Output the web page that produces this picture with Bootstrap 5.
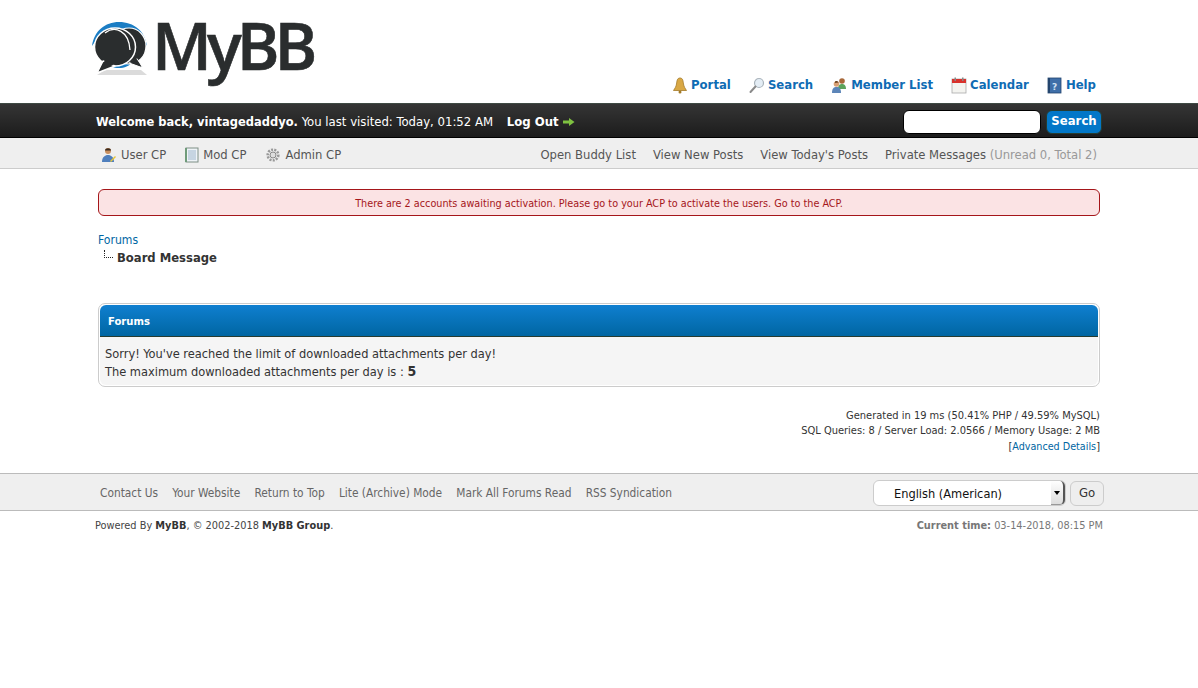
<!DOCTYPE html>
<html lang="en"><head><meta charset="utf-8"><title>Board Message</title>
<link rel="stylesheet" href="https://cdn.jsdelivr.net/npm/bootstrap@5.3.0/dist/css/bootstrap.min.css">
<style>
body{font-family:"DejaVu Sans Condensed","DejaVu Sans",sans-serif;font-size:12.7px;line-height:1.4;color:#333;background:#fff}
a{text-decoration:none;color:#0066a3}
.wrapx{width:1008px;margin-left:95px}
.top-head{height:103px;position:relative}
.logo-box{padding:0 0 0 91px;height:103px}
.logo-mark{margin-top:16px}
.logo-word{font-family:"Open Sans",sans-serif;font-weight:600;font-size:65px;line-height:66px;margin-top:12px;margin-left:-1px;letter-spacing:-5px;color:#2a2d2e;-webkit-text-stroke:.6px #2a2d2e}
.top-menu{position:absolute;right:102px;top:75px;gap:18px;font-size:13px;font-weight:700;line-height:20px}
.top-menu a{color:#0f6cb4;display:flex;align-items:center;gap:3px}
.dark-bar{height:35px;padding-top:3px;background:linear-gradient(#353535,#1c1c1c);border-top:1px solid #3f4a44;border-bottom:1px solid #000;color:#fff;font-size:13px}
.dark-bar .inner{width:1006px;margin-left:96px}
.dark-bar b{font-size:12.75px}
.dark-bar a{color:#fff;font-weight:700;font-size:13px;margin-left:10px}
.srch-form{margin:-1px 0 0}
.srch-in{width:138px;height:24px;border:1px solid #000;border-radius:6px;background:#fff;padding:0}
.srch-btn{width:56px;height:24px;margin-left:5px;border:1px solid #263c30;border-radius:6px;background:#0277c8;color:#fff;font-size:13px;font-weight:600;padding:0}
.sub-bar{height:31px;padding-top:4px;background:#efefef;border-bottom:1px solid #ccc;font-size:12.9px}
.sub-bar .inner{width:996px;margin-left:101px}
.sub-bar a{color:#555}
.sub-bar .greyed{color:#999}
.left-cp{gap:19px}
.right-cp{gap:17px}
.msg-red{margin:20px 0 0 98px;width:1002px;height:27px;background:#fbe3e4;border:1px solid #a5161a;border-radius:6px;color:#a5161a;font-size:10.75px;line-height:27px;text-align:center}
.crumbs{margin:15px 0 0 98px;height:72px;line-height:18px;font-size:12.1px}
.crumbs .here{font-size:12.9px;font-weight:700;color:#333;padding-left:19px;position:relative;display:block}
.tree-mark{position:absolute;left:6px;top:1px;width:9px;height:8px;border-left:1px dotted #222;border-bottom:1px dotted #222}
.box-shell{margin-left:98px;width:1002px;height:84px;border:1px solid #ccc;border-radius:7px;padding:1px;background:#fff}
.box-head{height:32px;background:linear-gradient(#0f7fd0,#0066a2);border-bottom:1px solid #263c30;border-radius:6px 6px 0 0;color:#fff;font-weight:700;font-size:11.2px;line-height:33px;padding-left:8px}
.box-body{height:48px;background:#f5f5f5;border-radius:0 0 6px 6px;padding:8px 5px;line-height:18px}
.box-body b{font-size:14px;line-height:1}
.debug-info{margin:21px 98px 0 0;font-size:11px;line-height:15.4px;text-align:right}
.debug-info a{font-size:10.7px}
.foot-bar{margin-top:19px;height:38px;padding-top:2px;background:#efefef;border-top:1px solid #bbb;border-bottom:1px solid #bbb}
.foot-bar .inner{width:1004px;margin-left:100px}
.foot-bar a{color:#666;font-size:11.8px;margin-right:14.2px}
.lang-sel{width:193px;height:26px;border:1px solid #ccc;border-radius:6px;background:#fff;padding-left:20px;font-size:12.7px;color:#111;line-height:25px;position:relative}
.sel-arrow{position:absolute;right:0;top:0;width:14px;height:24px;border-radius:0 5px 5px 0;background:linear-gradient(#fff,#ddd);border-right:2px solid #555;border-bottom:1px solid #999}
.sel-arrow:after{content:"";position:absolute;left:3px;top:10px;border:3px solid transparent;border-top:4px solid #000}
.go-btn{width:34px;height:25px;margin-left:4px;border:1px solid #ccc;border-radius:6px;background:#eee;color:#333;font-size:13px;padding:0}
.bottom-line{font-size:10.9px;margin-top:7px;color:#444;line-height:16px}
.bottom-line b{color:#333}
.bottom-line .clock{color:#777}
</style></head><body>

<header class="top-head">
<div class="logo-box d-flex align-items-start">
<svg width="62" height="62" viewBox="0 0 62 62" class="flex-shrink-0 logo-mark">
<path d="M1 30C3 15 14 6 28 6C43 6 54 15 56 30C50 20 40 14 28 14C16 14 7 20 1 30Z" fill="#1b7dc4"/>
<path d="M15 46C20 54 36 54 41 46Z" fill="#1b7dc4"/>
<path d="M6 59L14 54L50 54L56 59Z" fill="#ccc" opacity=".7"/>
<ellipse cx="38" cy="30" rx="17" ry="18" fill="#2a2d2e" stroke="#fff" stroke-width="1.200"/>
<path d="M46 43L52 52L38 47Z" fill="#2a2d2e" stroke="#fff" stroke-width="1.200" stroke-linejoin="round"/>
<path d="M45 42L50 50L38 46Z" fill="#2a2d2e"/>
<ellipse cx="24" cy="31" rx="20.500" ry="19" fill="#2a2d2e" stroke="#fff" stroke-width="1.500"/>
<path d="M12 45L6 57L24 50Z" fill="#2a2d2e" stroke="#fff" stroke-width="1.500" stroke-linejoin="round"/>
<path d="M14 44L9 54L24 48Z" fill="#2a2d2e"/>
<path d="M14 17C24 9 38 15 39 34" fill="none" stroke="#fff" stroke-width="1.300"/>
</svg>
<span class="logo-word">MyBB</span>
</div>
<nav class="top-menu d-flex">
<a href="#"><svg width="16" height="17" viewBox="0 0 16 17"><path d="M8 1C5 1 5 4 4.500 7C4 10 3 11 1.500 13.500H14.500C13 11 12 10 11.500 7C11 4 11 1 8 1Z" fill="#d9a845" stroke="#a37a28" stroke-width=".8"/><circle cx="8" cy="15" r="1.500" fill="#a37a28"/></svg>Portal</a>
<a href="#"><svg width="16" height="17" viewBox="0 0 16 17"><circle cx="10" cy="6" r="4.500" fill="#e4edf5" stroke="#aab4bc" stroke-width="1.200"/><path d="M6.500 9.500L1.500 15" stroke="#8a8a8a" stroke-width="2" stroke-linecap="round"/></svg>Search</a>
<a href="#"><svg width="17" height="17" viewBox="0 0 17 17"><circle cx="11" cy="4" r="2.800" fill="#a8683a"/><path d="M7 12C7 8 9 7 11 7C13 7 15 8 15 12Z" fill="#5ca35c"/><circle cx="5.500" cy="7" r="2.800" fill="#d9a074"/><path d="M4 5C4 3.500 7 3.500 7.500 5.500L4 6Z" fill="#6b4423"/><path d="M1 16C1 11 3 10 5.500 10C8 10 10 11 10 16Z" fill="#5c85b8"/></svg>Member List</a>
<a href="#"><svg width="16" height="17" viewBox="0 0 16 17"><rect x="1" y="2" width="14" height="14" fill="#f4f4f0" stroke="#aaa" stroke-width=".8"/><rect x="1" y="2" width="14" height="4" fill="#d8322c"/><rect x="3.500" y="0.500" width="1.500" height="3.500" fill="#8a8a8a"/><rect x="11" y="0.500" width="1.500" height="3.500" fill="#8a8a8a"/></svg>Calendar</a>
<a href="#"><svg width="16" height="17" viewBox="0 0 16 17"><rect x="1" y="1" width="13" height="15" fill="#3f6fa8" stroke="#24456e" stroke-width=".8"/><rect x="1" y="1" width="2" height="15" fill="#24456e"/><text x="5" y="12.500" font-size="9" fill="#cfe0f2" font-family="DejaVu Sans">?</text></svg>Help</a>
</nav>
</header>

<div class="dark-bar"><div class="inner d-flex align-items-center justify-content-between h-100">
<div><b>Welcome back, vintagedaddyo.</b> You last visited: Today, 01:52 AM <a href="#">Log Out <svg width="12" height="10" viewBox="0 0 12 10"><path d="M0 3.500H6V1L11.500 5L6 9V6.500H0Z" fill="#7fc241"/></svg></a></div>
<form class="d-flex srch-form"><input class="srch-in" type="text" aria-label="Search"><button class="srch-btn" type="button">Search</button></form>
</div></div>

<div class="sub-bar"><div class="inner d-flex align-items-center justify-content-between h-100">
<div class="d-flex left-cp">
<a href="#" class="d-flex align-items-center gap-1"><svg width="16" height="16" viewBox="0 0 16 16"><circle cx="7" cy="4" r="3" fill="#c98f5f"/><path d="M4 3.500C4 0.500 10 0.500 10 3.500Z" fill="#3d2c1e"/><path d="M1 15C1 10 4 8 7 8C10 8 13 10 13 15Z" fill="#4f7fbd"/><path d="M9 14L14 9L15 10L10 15Z" fill="#e8c53a"/></svg>User CP</a>
<a href="#" class="d-flex align-items-center gap-1"><svg width="14" height="16" viewBox="0 0 14 16"><rect x="1" y="1" width="12" height="14" fill="#eef3f7" stroke="#7e8f86"/><path d="M3 4H11M3 6H11M3 8H11M3 10H11M3 12H11" stroke="#9fb6cc"/><path d="M1 1V15" stroke="#6f9b7a" stroke-width="2"/></svg>Mod CP</a>
<a href="#" class="d-flex align-items-center gap-1"><svg width="16" height="16" viewBox="0 0 16 16"><circle cx="8" cy="8" r="5.300" fill="none" stroke="#999" stroke-width="2.600" stroke-dasharray="2 1.200"/><circle cx="8" cy="8" r="3" fill="#ddd" stroke="#888"/></svg>Admin CP</a>
</div>
<div class="d-flex right-cp">
<a href="#">Open Buddy List</a><a href="#">View New Posts</a><a href="#">View Today's Posts</a>
<span><a href="#">Private Messages</a> <span class="greyed">(Unread 0, Total 2)</span></span>
</div>
</div></div>

<div class="msg-red">There are 2 accounts awaiting activation. Please go to your ACP to activate the users. Go to the ACP.</div>

<div class="crumbs"><a href="#">Forums</a><span class="here"><span class="tree-mark"></span>Board Message</span></div>

<div class="box-shell">
<div class="box-head">Forums</div>
<div class="box-body">Sorry! You've reached the limit of downloaded attachments per day!<br>The maximum downloaded attachments per day is : <b>5</b></div>
</div>

<div class="debug-info">Generated in 19 ms (50.41% PHP / 49.59% MySQL)<br>SQL Queries: 8 / Server Load: 2.0566 / Memory Usage: 2 MB<br>[<a href="#">Advanced Details</a>]</div>

<div class="foot-bar"><div class="inner d-flex align-items-center justify-content-between h-100">
<div><a href="#">Contact Us</a><a href="#">Your Website</a><a href="#">Return to Top</a><a href="#">Lite (Archive) Mode</a><a href="#">Mark All Forums Read</a><a href="#">RSS Syndication</a></div>
<div class="d-flex align-items-center"><div class="lang-sel">English (American)<span class="sel-arrow"></span></div><button class="go-btn" type="button">Go</button></div>
</div></div>

<div class="wrapx bottom-line d-flex justify-content-between">
<div>Powered By <b>MyBB</b>, © 2002-2018 <b>MyBB Group</b>.</div>
<div class="clock"><b class="clock">Current time:</b> 03-14-2018, 08:15 PM</div>
</div>
</body></html>
